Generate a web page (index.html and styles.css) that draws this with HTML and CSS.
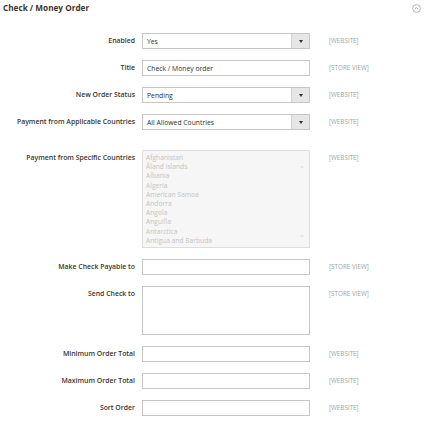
FILE: index.html
```html
<!DOCTYPE html>
<html>
<head>
<meta charset="utf-8">
<link rel="stylesheet" href="styles.css">
</head>
<body>
<div class="section">
  <div class="section-head">
    <span class="title">Check / Money Order</span>
    <span class="toggle">
      <svg width="9" height="9" viewBox="0 0 18 18"><circle cx="9" cy="9" r="7.8" fill="none" stroke="#9a9a9a" stroke-width="1.4"/><path d="M5.6 10.6 L9 7.2 L12.4 10.6" fill="none" stroke="#8a8a8a" stroke-width="1.6"/></svg>
    </span>
  </div>
  <div class="form">
    <div class="row">
      <div class="label">Enabled</div>
      <div class="box select"><span class="val">Yes</span><span class="arrow"><i class="tri"></i></span></div>
      <div class="scope">[WEBSITE]</div>
    </div>
    <div class="row">
      <div class="label">Title</div>
      <div class="box"><span class="val">Check / Money order</span></div>
      <div class="scope">[STORE VIEW]</div>
    </div>
    <div class="row">
      <div class="label">New Order Status</div>
      <div class="box select"><span class="val">Pending</span><span class="arrow"><i class="tri"></i></span></div>
      <div class="scope">[WEBSITE]</div>
    </div>
    <div class="row">
      <div class="label">Payment from Applicable Countries</div>
      <div class="box select"><span class="val">All Allowed Countries</span><span class="arrow"><i class="tri"></i></span></div>
      <div class="scope">[WEBSITE]</div>
    </div>
    <div class="row row-multi">
      <div class="label">Payment from Specific Countries</div>
      <div class="box multi">
        <div class="options">
          <span>Afghanistan</span>
          <span>Åland Islands</span>
          <span>Albania</span>
          <span>Algeria</span>
          <span>American Samoa</span>
          <span>Andorra</span>
          <span>Angola</span>
          <span>Anguilla</span>
          <span>Antarctica</span>
          <span>Antigua and Barbuda</span>
        </div>
        <div class="scrollbar"><span class="chev">&#8963;</span><span class="chev down">&#8964;</span></div>
      </div>
      <div class="scope">[WEBSITE]</div>
    </div>
    <div class="row">
      <div class="label">Make Check Payable to</div>
      <div class="box"></div>
      <div class="scope">[STORE VIEW]</div>
    </div>
    <div class="row">
      <div class="label">Send Check to</div>
      <div class="box area"></div>
      <div class="scope">[STORE VIEW]</div>
    </div>
    <div class="row">
      <div class="label">Minimum Order Total</div>
      <div class="box"></div>
      <div class="scope">[WEBSITE]</div>
    </div>
    <div class="row">
      <div class="label">Maximum Order Total</div>
      <div class="box"></div>
      <div class="scope">[WEBSITE]</div>
    </div>
    <div class="row">
      <div class="label">Sort Order</div>
      <div class="box"></div>
      <div class="scope">[WEBSITE]</div>
    </div>
  </div>
</div>
</body>
</html>
```
FILE: styles.css
```css
html, body {
  margin: 0;
  padding: 0;
  background: #ffffff;
}
body {
  font-family: "Open Sans", "DejaVu Sans", sans-serif;
  color: #303030;
}
.section {
  width: 426px;
}
.section-head {
  display: flex;
  align-items: center;
  justify-content: space-between;
  height: 16px;
  padding: 0 5px 0 3px;
}
.title {
  font-size: 8.2px;
  font-weight: 700;
  color: #41362f;
  line-height: 16px;
}
.toggle {
  display: flex;
  width: 9px;
  height: 9px;
}
.form {
  margin-top: 17px;
  display: flex;
  flex-direction: column;
  gap: 11px;
}
.row {
  display: grid;
  grid-template-columns: 135px 168px 1fr;
  column-gap: 7px;
  align-items: start;
}
.row-multi {
  margin-top: 9px;
}
.label {
  text-align: right;
  font-size: 6.9px;
  font-weight: 600;
  line-height: 16px;
  color: #3a3530;
  white-space: nowrap;
}
.scope {
  padding-left: 12px;
  font-size: 6.3px;
  line-height: 16px;
  color: #a3a3a3;
}
.box {
  box-sizing: border-box;
  height: 16px;
  border: 1px solid #c6c6c6;
  background: #fff;
  display: flex;
  align-items: center;
}
.val {
  flex: 1;
  padding-left: 4px;
  font-size: 6.8px;
  color: #303030;
  white-space: nowrap;
}
.select .arrow {
  width: 17px;
  align-self: stretch;
  background: #e6e6e6;
  border-left: 1px solid #d2d2d2;
  display: flex;
  align-items: center;
  justify-content: center;
}
.tri {
  width: 0;
  height: 0;
  border-left: 2.5px solid transparent;
  border-right: 2.5px solid transparent;
  border-top: 3px solid #303030;
}
.area {
  height: 49px;
}
.multi {
  height: 98px;
  background: #f6f6f6;
  border-color: #dedede;
  align-items: stretch;
}
.options {
  flex: 1;
  display: flex;
  flex-direction: column;
  padding: 2px 0 0 3px;
  font-size: 6.7px;
  line-height: 9.2px;
  color: #c4c4c4;
}
.scrollbar {
  width: 14px;
  display: flex;
  flex-direction: column;
  justify-content: space-between;
  align-items: center;
  padding: 14px 0 8px 0;
  color: #cfcfcf;
  font-size: 7px;
  line-height: 8px;
}
```
